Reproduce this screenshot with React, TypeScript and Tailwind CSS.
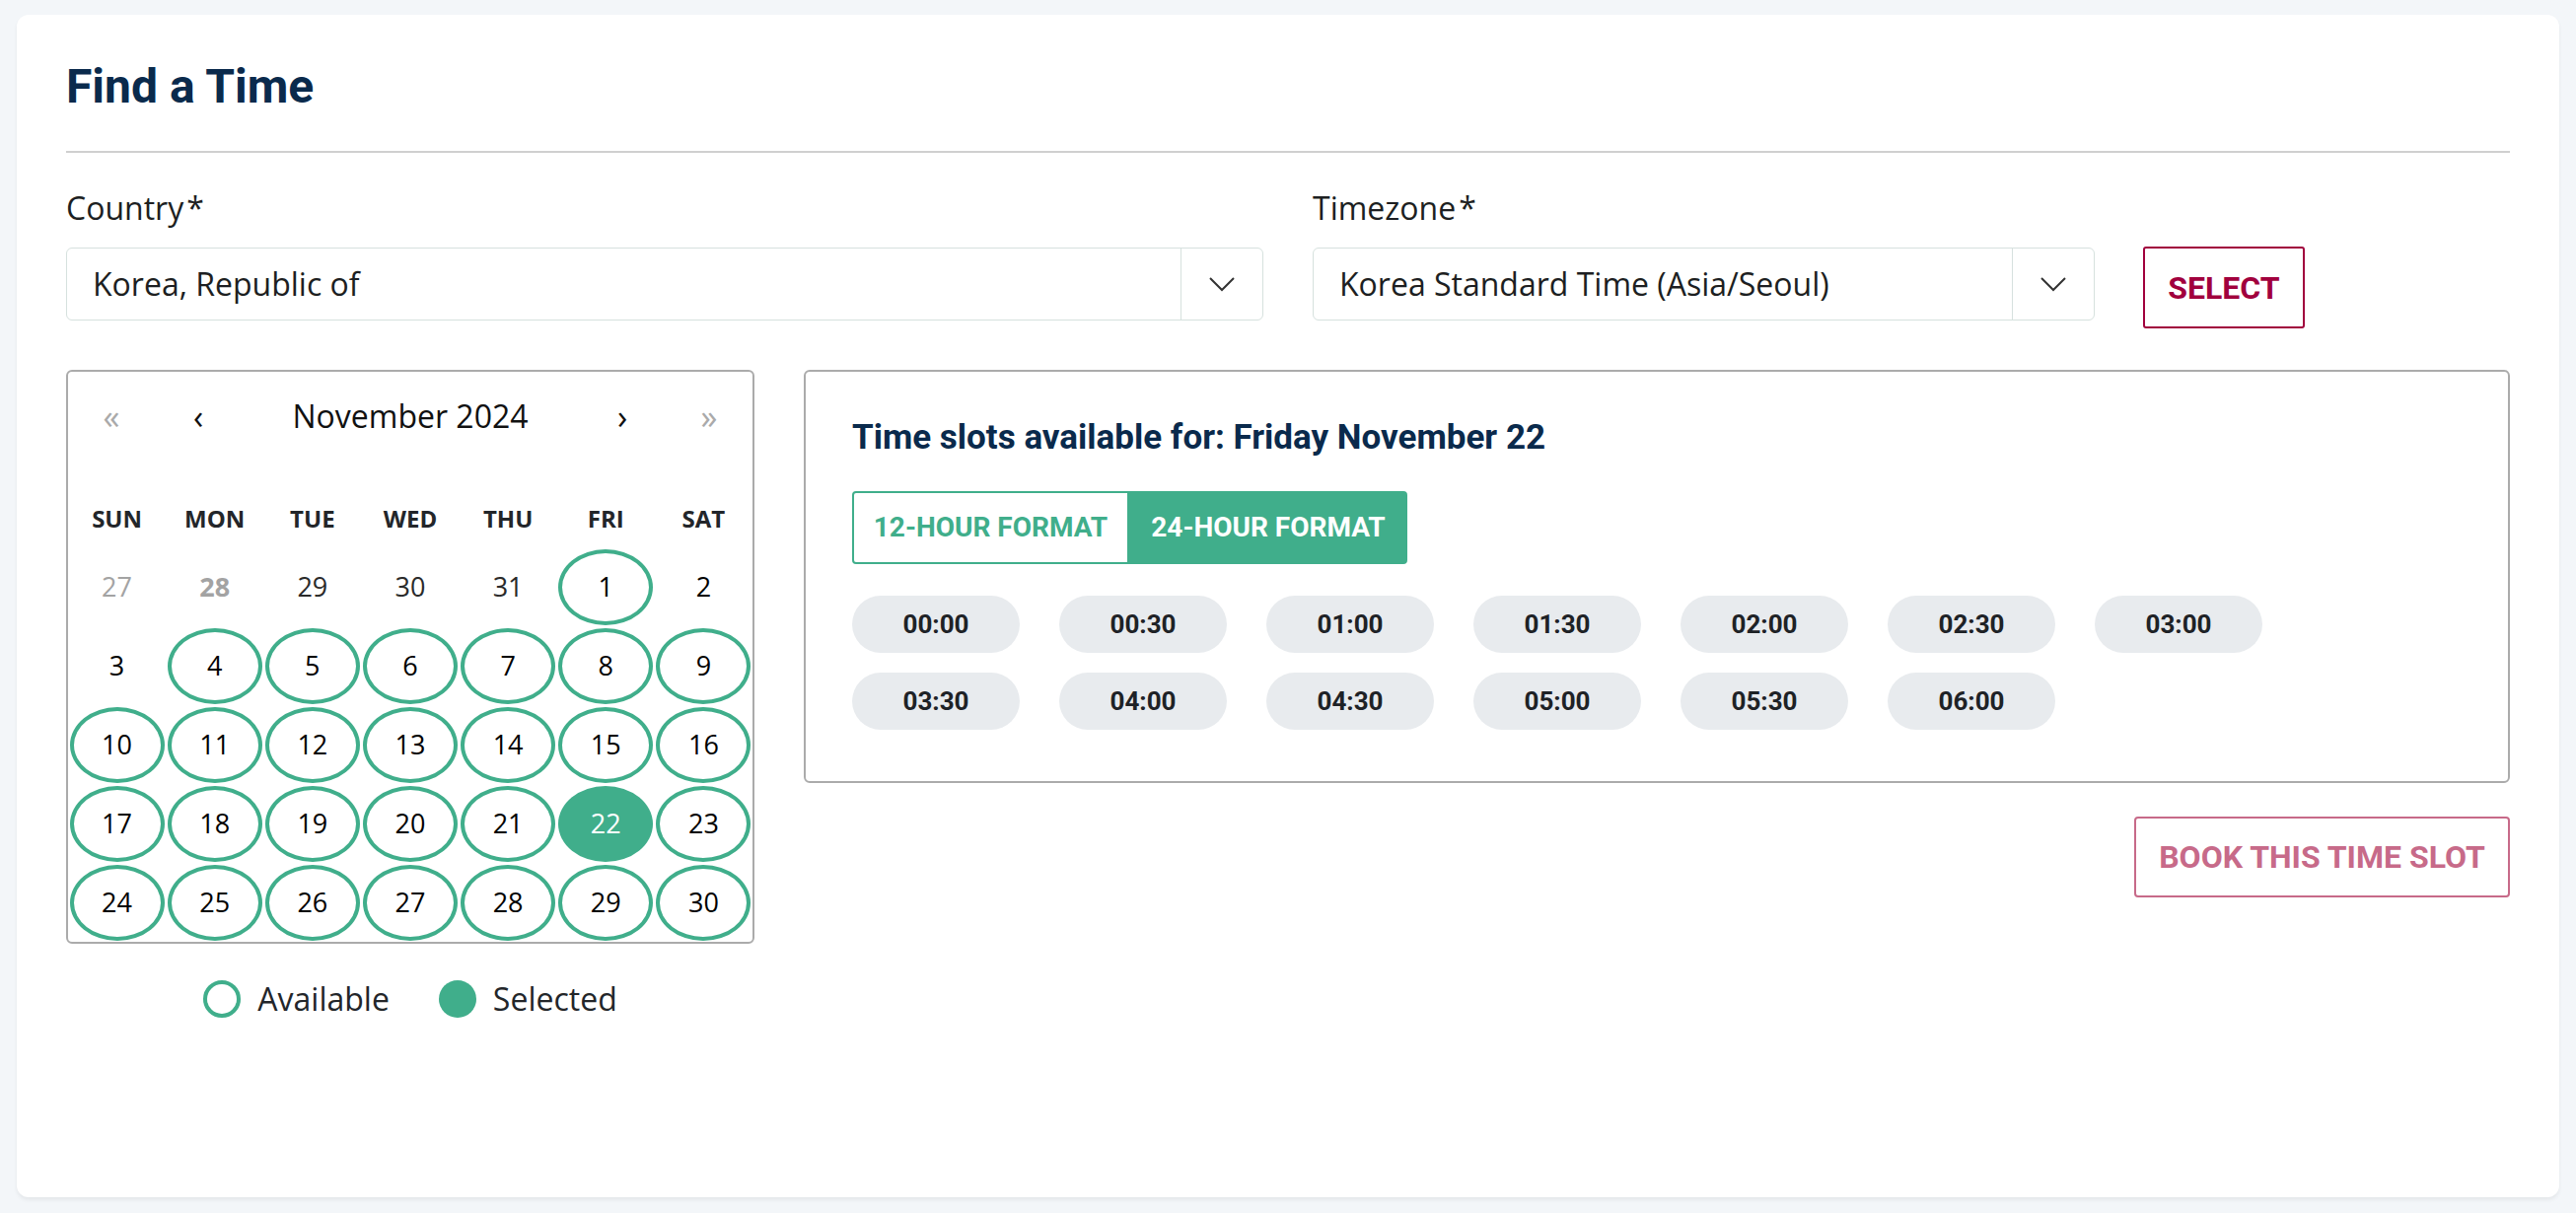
import React, { useState } from "react";

type DayKind = "muted" | "mutedBold" | "dark" | "plain" | "available" | "selected";

type Day = { n: number; kind: DayKind };

const weekdays = ["SUN", "MON", "TUE", "WED", "THU", "FRI", "SAT"];

function buildDays(): Day[] {
  const days: Day[] = [
    { n: 27, kind: "muted" },
    { n: 28, kind: "mutedBold" },
    { n: 29, kind: "dark" },
    { n: 30, kind: "dark" },
    { n: 31, kind: "dark" },
    { n: 1, kind: "available" },
    { n: 2, kind: "plain" },
    { n: 3, kind: "plain" },
  ];
  for (let i = 4; i <= 30; i++) {
    days.push({ n: i, kind: i == 22 ? "selected" : "available" });
  }
  return days;
}

const slots = [
  "00:00", "00:30", "01:00", "01:30", "02:00", "02:30", "03:00",
  "03:30", "04:00", "04:30", "05:00", "05:30", "06:00",
];

function Chevron() {
  return (
    <svg width="28" height="16" viewBox="0 0 28 16" fill="none">
      <polyline points="2,2 14,14 26,2" stroke="#333" strokeWidth="2" />
    </svg>
  );
}

function SelectBox({ value, width }: { value: string; width: string }) {
  return (
    <div
      className={
        "flex h-[74px] items-stretch rounded-[6px] border border-[#d6e1de] bg-white " +
        width
      }
    >
      <div className="flex flex-1 items-center pl-[26px] text-[32px] text-[#1d1f22]">
        {value}
      </div>
      <div className="flex w-[83px] items-center justify-center border-l border-[#d6e1de]">
        <Chevron />
      </div>
    </div>
  );
}

function DayTile({ day }: { day: Day }) {
  let text = "text-[#000]";
  let ring = "";
  if (day.kind == "muted") text = "text-[#a3a3a3]";
  if (day.kind == "mutedBold") text = "text-[#a3a3a3] font-bold";
  if (day.kind == "dark") text = "text-[#2a2a2a]";
  if (day.kind == "available") ring = "border-[4px] border-[#40ae8b]";
  if (day.kind == "selected") {
    ring = "bg-[#40ae8b]";
    text = "text-white";
  }
  return (
    <div className="flex h-[80px] items-center justify-center">
      <div
        className={
          "flex h-[77px] w-[96px] items-center justify-center rounded-[50%] text-[27px] " +
          ring +
          " " +
          text
        }
      >
        {day.n}
      </div>
    </div>
  );
}

export default function App() {
  const [format, setFormat] = useState<"12" | "24">("24");
  const days = buildDays();

  return (
    <div
      className="h-[1230px] bg-[#f3f6f9] pt-[15px] pr-[17px] pb-[16px] pl-[17px]"
      style={{ fontFamily: "'Open Sans', 'Noto Sans', sans-serif" }}
    >
      <div className="flex h-full flex-col rounded-[12px] bg-white px-[50px] pt-[45px] shadow-[0_3px_4px_rgba(0,0,0,0.06)]">
        <h1 className="font-['Roboto',sans-serif] text-[48px] leading-[56px] font-bold text-[#0a2a4c]">
          Find a Time
        </h1>
        <div className="mt-[37px] h-[2px] bg-[#cfcfcf]" />

        {/* country + timezone */}
        <div className="mt-[36px] flex gap-[50px]">
          <div className="w-[1214px]">
            <div className="text-[32px] leading-[40px] text-[#1d1f22]">
              Country<span className="ml-[3px]">*</span>
            </div>
            <div className="mt-[20px]">
              <SelectBox value="Korea, Republic of" width="w-[1214px]" />
            </div>
          </div>
          <div className="flex-1">
            <div className="text-[32px] leading-[40px] text-[#1d1f22]">
              Timezone<span className="ml-[3px]">*</span>
            </div>
            <div className="mt-[19px] flex items-start gap-[49px]">
              <SelectBox
                value="Korea Standard Time (Asia/Seoul)"
                width="w-[793px] mt-[1px]"
              />
              <button className="h-[83px] w-[164px] rounded-[3px] border-2 border-[#a1003d] font-['Roboto',sans-serif] text-[32px] font-bold text-[#a1003d]">
                SELECT
              </button>
            </div>
          </div>
        </div>

        {/* calendar + slots */}
        <div className="mt-[42px] flex gap-[50px]">
          <div className="w-[698px]">
            <div className="rounded-[6px] border-2 border-[#ababab]">
              <div className="flex h-[90px] items-center">
                <div className="flex w-[88px] justify-center text-[34px] text-[#aaaaaa]">«</div>
                <div className="flex w-[88px] justify-center text-[34px] text-[#111]">‹</div>
                <div className="flex flex-1 justify-center text-[32px] text-[#111]">
                  November 2024
                </div>
                <div className="flex w-[88px] justify-center text-[34px] text-[#111]">›</div>
                <div className="flex w-[88px] justify-center text-[34px] text-[#aaaaaa]">»</div>
              </div>
              <div className="mt-[30px] grid h-[58px] grid-cols-7 items-center">
                {weekdays.map((w) => (
                  <div key={w} className="text-center text-[24px] font-bold text-[#23262a]">
                    {w}
                  </div>
                ))}
              </div>
              <div className="grid grid-cols-7">
                {days.map((d, i) => (
                  <DayTile key={i} day={d} />
                ))}
              </div>
            </div>
            <div className="mt-[36px] flex h-[40px] items-center justify-center text-[32px] text-[#23262a]">
              <div className="h-[38px] w-[38px] rounded-full border-[4px] border-[#40ae8b]" />
              <span className="ml-[17px]">Available</span>
              <div className="ml-[50px] h-[38px] w-[38px] rounded-full bg-[#40ae8b]" />
              <span className="ml-[17px]">Selected</span>
            </div>
          </div>

          <div className="flex-1">
            <div className="rounded-[6px] border-2 border-[#ababab] pt-[47px] pr-[48px] pb-[52px] pl-[47px]">
              <h2 className="font-['Roboto',sans-serif] text-[35px] leading-[40px] font-bold text-[#0a2a4c]">
                Time slots available for: Friday November 22
              </h2>
              <div className="mt-[34px] flex h-[74px] w-[563px] font-['Roboto',sans-serif] text-[28px] font-bold">
                <button
                  onClick={() => setFormat("12")}
                  className={
                    "w-[281px] rounded-l-[4px] border-2 border-[#40ae8b] " +
                    (format == "12" ? "bg-[#40ae8b] text-white" : "bg-white text-[#40ae8b]")
                  }
                >
                  12-HOUR FORMAT
                </button>
                <button
                  onClick={() => setFormat("24")}
                  className={
                    "w-[282px] rounded-r-[4px] border-2 border-[#40ae8b] " +
                    (format == "24" ? "bg-[#40ae8b] text-white" : "bg-white text-[#40ae8b]")
                  }
                >
                  24-HOUR FORMAT
                </button>
              </div>
              <div className="mt-[32px] flex flex-wrap gap-x-[40px] gap-y-[20px]">
                {slots.map((s) => (
                  <button
                    key={s}
                    className="h-[58px] w-[170px] rounded-full bg-[#e8ebee] font-['Roboto',sans-serif] text-[26px] font-bold text-[#1e2226]"
                  >
                    {s}
                  </button>
                ))}
              </div>
            </div>
            <div className="mt-[34px] flex justify-end">
              <button className="h-[82px] w-[381px] rounded-[4px] border-2 border-[#c76a89] font-['Roboto',sans-serif] text-[32px] font-bold text-[#c76a89]">
                BOOK THIS TIME SLOT
              </button>
            </div>
          </div>
        </div>
      </div>
    </div>
  );
}
